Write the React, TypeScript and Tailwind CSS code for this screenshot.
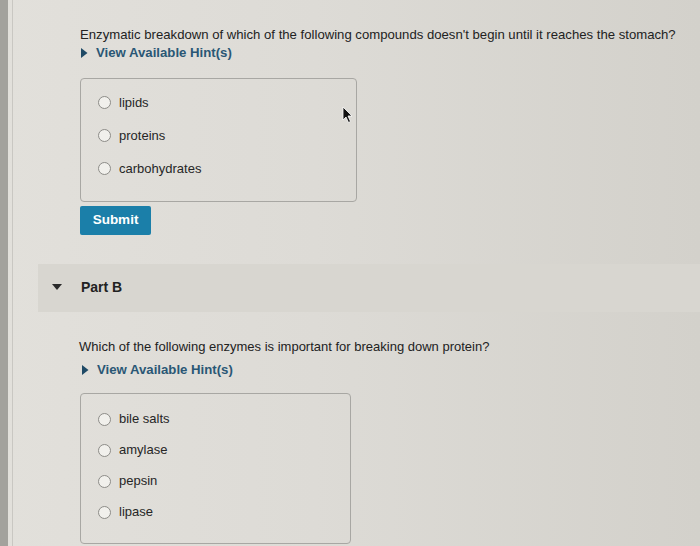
import React from "react";

const font = { fontFamily: '"Liberation Sans", Arial, sans-serif' };

function Radio({ label, h }: { label: string; h: string }) {
  return (
    <div className={"flex items-center shrink-0 " + h}>
      <span className="w-[13px] h-[13px] rounded-full border border-[#8d8c88] bg-[#f1f0ec] shrink-0" />
      <span className="ml-[8px] text-[13px] text-[#262626] whitespace-nowrap">{label}</span>
    </div>
  );
}

function Hint() {
  return (
    <div className="flex items-center gap-[8px]">
      <svg width="8" height="10" viewBox="0 0 8 10" className="shrink-0">
        <path d="M1 0 L7.5 5 L1 10 Z" fill="#1f4a66" />
      </svg>
      <span className="text-[13.2px] font-bold text-[#2a5775] whitespace-nowrap">View Available Hint(s)</span>
    </div>
  );
}

export default function App() {
  return (
    <div
      className="relative w-[700px] h-[546px] overflow-hidden flex bg-[linear-gradient(90deg,#e2e0db_0%,#dddbd6_45%,#d3d1cb_100%)]"
      style={font}
    >
      <div className="w-[8px] h-full bg-[#a3a29d] shrink-0" />
      <div className="w-[4px] h-full shrink-0" />
      <div className="w-px h-full bg-[#c9c7c2] shrink-0" />
      <div className="flex-1 flex flex-col">
        <div className="pl-[67px] pt-[27px] shrink-0">
          <p className="text-[13.15px] text-[#222] leading-[16px] whitespace-nowrap">
            Enzymatic breakdown of which of the following compounds doesn't begin until it reaches the stomach?
          </p>
          <div className="mt-0">
            <Hint />
          </div>
          <div className="mt-[15px] w-[277px] h-[124px] border border-[#a8a7a3] rounded-[4px] pl-[17px] pt-[7px]">
            <Radio label="lipids" h="h-[33px]" />
            <Radio label="proteins" h="h-[33px]" />
            <Radio label="carbohydrates" h="h-[33px]" />
          </div>
          <button className="mt-[4px] w-[71px] h-[29px] rounded-[2px] bg-[#1b7fa9] text-white text-[13.5px] font-bold">
            Submit
          </button>
        </div>
        <div className="mt-[29px] ml-[25px] h-[48px] shrink-0 bg-[#d8d6d0] flex items-center pl-[14px]">
          <svg width="10" height="7" viewBox="0 0 10 7">
            <path d="M0 0 L10 0 L5 6 Z" fill="#2a2a2a" />
          </svg>
          <span className="ml-[19px] text-[14px] font-bold text-[#222]">Part B</span>
        </div>
        <div className="pl-[66px] pt-[27px] shrink-0">
          <p className="text-[13px] text-[#222] leading-[16px] whitespace-nowrap">
            Which of the following enzymes is important for breaking down protein?
          </p>
          <div className="mt-[5px] pl-[2px]">
            <Hint />
          </div>
          <div className="mt-[13px] ml-[1px] w-[271px] h-[151px] border border-[#a8a7a3] rounded-[4px] pl-[17px] pt-[10px]">
            <Radio label="bile salts" h="h-[31px]" />
            <Radio label="amylase" h="h-[31px]" />
            <Radio label="pepsin" h="h-[31px]" />
            <Radio label="lipase" h="h-[31px]" />
          </div>
        </div>
      </div>
      <svg className="absolute left-[342px] top-[106px]" width="12" height="18" viewBox="0 0 12 18">
        <path d="M1 1 L1 14 L4 11 L6.5 16.5 L8.5 15.5 L6 10 L10 10 Z" fill="#111" stroke="#fff" strokeWidth="0.8" />
      </svg>
    </div>
  );
}
